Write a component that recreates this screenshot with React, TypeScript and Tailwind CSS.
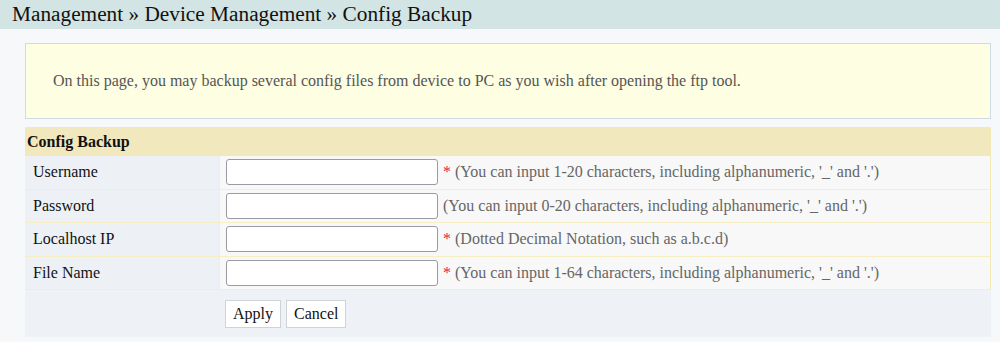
import React from "react";

const serif = { fontFamily: '"Liberation Serif", "Times New Roman", serif' };

function Row({ label, required, hint }: { label: string; required: boolean; hint: string }) {
  return (
    <div className="flex h-[33.5px] border-b border-[#f6efc4]">
      <div className="w-[195px] bg-[#edf1f6] border-r border-[#f6efc4] pl-[8px] flex items-center text-[16px] text-[#111]">
        {label}
      </div>
      <div className="flex-1 flex items-center pl-[6px] bg-[#f8f8f8]">
        <input
          type="text"
          className="w-[212px] h-[26px] bg-white border border-[#9a9aa2] rounded-[3px] outline-none"
        />
        <span className="ml-[5px] text-[16px] text-[#666] whitespace-nowrap">
          {required && <span className="text-[#e8233a] mr-[4px]">*</span>}
          {hint}
        </span>
      </div>
    </div>
  );
}

export default function App() {
  return (
    <div className="w-[1000px] h-[342px] bg-[#f7f8f9] overflow-hidden" style={serif}>
      <div className="h-[29px] bg-[#d3e4e4] pl-[12px] flex items-center text-[21.3px] text-[#111]">
        Management » Device Management » Config Backup
      </div>
      <div className="pl-[25px] pr-[9px]">
        <div className="mt-[14px] h-[76px] bg-[#fefee3] border border-[#cddbe6] pl-[27px] flex items-center text-[16px] text-[#555]">
          On this page, you may backup several config files from device to PC as you wish after opening the ftp tool.
        </div>
        <div className="mt-[8px] border-r border-[#f3e9b6]">
          <div className="h-[29px] bg-[#f2e8bd] pl-[2px] flex items-center text-[16px] font-bold text-[#111]">
            Config Backup
          </div>
          <Row label="Username" required hint="(You can input 1-20 characters, including alphanumeric, '_' and '.')" />
          <Row label="Password" required={false} hint="(You can input 0-20 characters, including alphanumeric, '_' and '.')" />
          <Row label="Localhost IP" required hint="(Dotted Decimal Notation, such as a.b.c.d)" />
          <Row label="File Name" required hint="(You can input 1-64 characters, including alphanumeric, '_' and '.')" />
        </div>
        <div className="h-[47px] bg-[#eef1f5] flex items-center pl-[200px] gap-[5px]">
          <button className="h-[28px] px-[7px] bg-white border border-[#cfd3d8] text-[16px] text-[#111]">Apply</button>
          <button className="h-[28px] px-[7px] bg-white border border-[#cfd3d8] text-[16px] text-[#111]">Cancel</button>
        </div>
      </div>
    </div>
  );
}
